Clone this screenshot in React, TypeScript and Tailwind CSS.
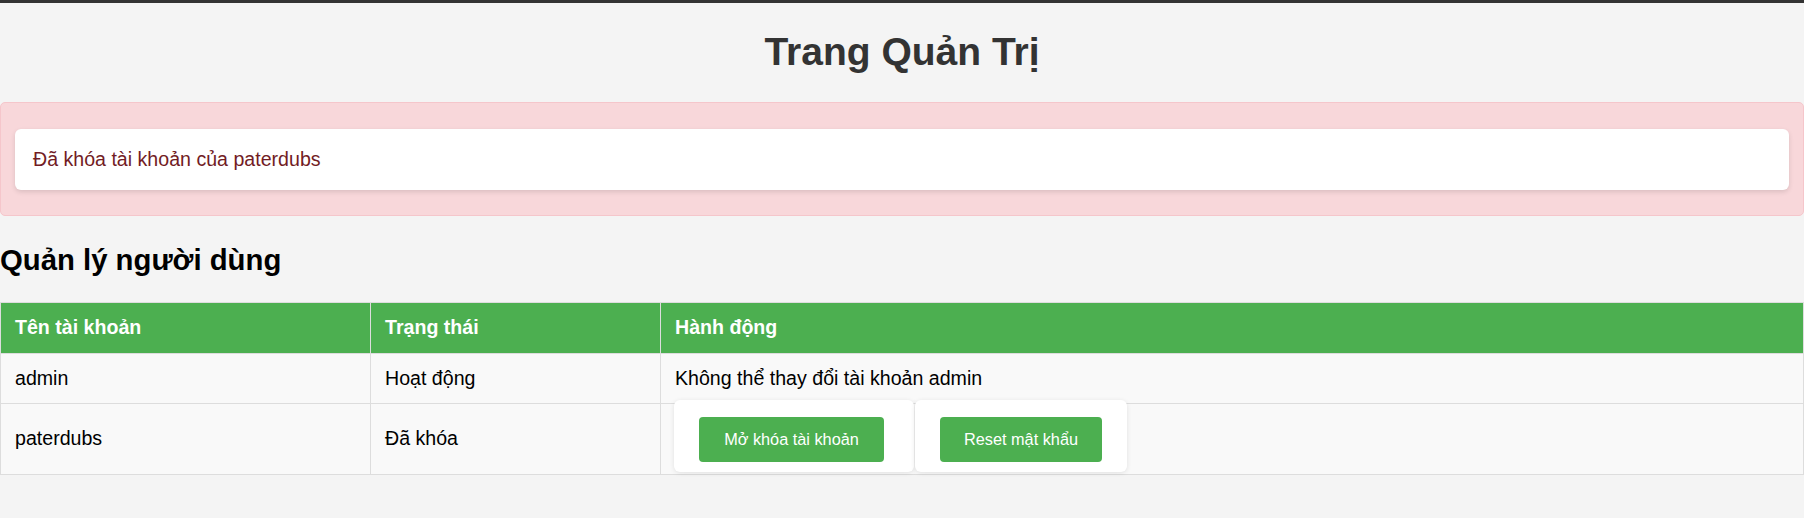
const users = [
  { name: "admin", status: "Hoạt động", locked: false },
  { name: "paterdubs", status: "Đã khóa", locked: true },
];

export default function App() {
  return (
    <div className="min-h-screen bg-[#f4f4f4] font-['Liberation_Sans',Arial,sans-serif] text-[19.6px] text-black">
      <div className="h-[3px] bg-[#333]" />
      <h1 className="mt-[27px] text-center text-[39px] font-bold leading-[44px] text-[#333]">
        Trang Quản Trị
      </h1>

      <div className="mt-[28px] rounded-[5px] border border-[#f5c6cb] bg-[#f8d7da] px-[14px] pt-[26px] pb-[25px]">
        <div className="flex h-[61px] items-center rounded-[6px] bg-white pt-[1px] pl-[18px] text-[#721c24] shadow-[0_2px_5px_rgba(0,0,0,0.12)]">
          Đã khóa tài khoản của paterdubs
        </div>
      </div>

      <h2 className="mt-[27px] text-[29.3px] font-bold leading-[33px]">Quản lý người dùng</h2>

      <div className="mt-[26px] grid grid-cols-[370px_290px_1fr] border border-[#ddd]">
        <div className="flex h-[51px] items-center border-r border-b border-[#ddd] bg-[#4CAF50] px-[14px] font-bold text-white">
          Tên tài khoản
        </div>
        <div className="flex h-[51px] items-center border-r border-b border-[#ddd] bg-[#4CAF50] px-[14px] font-bold text-white">
          Trạng thái
        </div>
        <div className="flex h-[51px] items-center border-b border-[#ddd] bg-[#4CAF50] px-[14px] font-bold text-white">
          Hành động
        </div>

        {users.map((user, i) => {
          const last = i === users.length - 1;
          const rowCls = last ? "h-[70px]" : "h-[50px] border-b";
          return (
            <div key={user.name} className="contents">
              <div className={`flex items-center border-r border-[#ddd] bg-[#f9f9f9] px-[14px] ${rowCls}`}>
                {user.name}
              </div>
              <div className={`flex items-center border-r border-[#ddd] bg-[#f9f9f9] px-[14px] ${rowCls}`}>
                {user.status}
              </div>
              {user.locked ? (
                <div className={`flex items-start gap-[1px] border-[#ddd] bg-[#f9f9f9] pl-[13px] ${rowCls}`}>
                  <div className="-mt-[4px] h-[72px] w-[240px] rounded-[6px] bg-white pt-[17px] pl-[25px] shadow-[0_1px_5px_rgba(0,0,0,0.1)]">
                    <button className="flex h-[45px] w-[185px] items-center justify-center rounded-[4px] bg-[#4CAF50] text-[16.3px] text-white">
                      Mở khóa tài khoản
                    </button>
                  </div>
                  <div className="-mt-[4px] h-[72px] w-[212px] rounded-[6px] bg-white pt-[17px] pl-[25px] shadow-[0_1px_5px_rgba(0,0,0,0.1)]">
                    <button className="flex h-[45px] w-[162px] items-center justify-center rounded-[4px] bg-[#4CAF50] text-[16.3px] text-white">
                      Reset mật khẩu
                    </button>
                  </div>
                </div>
              ) : (
                <div className={`flex items-center border-[#ddd] bg-[#f9f9f9] px-[14px] ${rowCls}`}>
                  Không thể thay đổi tài khoản admin
                </div>
              )}
            </div>
          );
        })}
      </div>
    </div>
  );
}
